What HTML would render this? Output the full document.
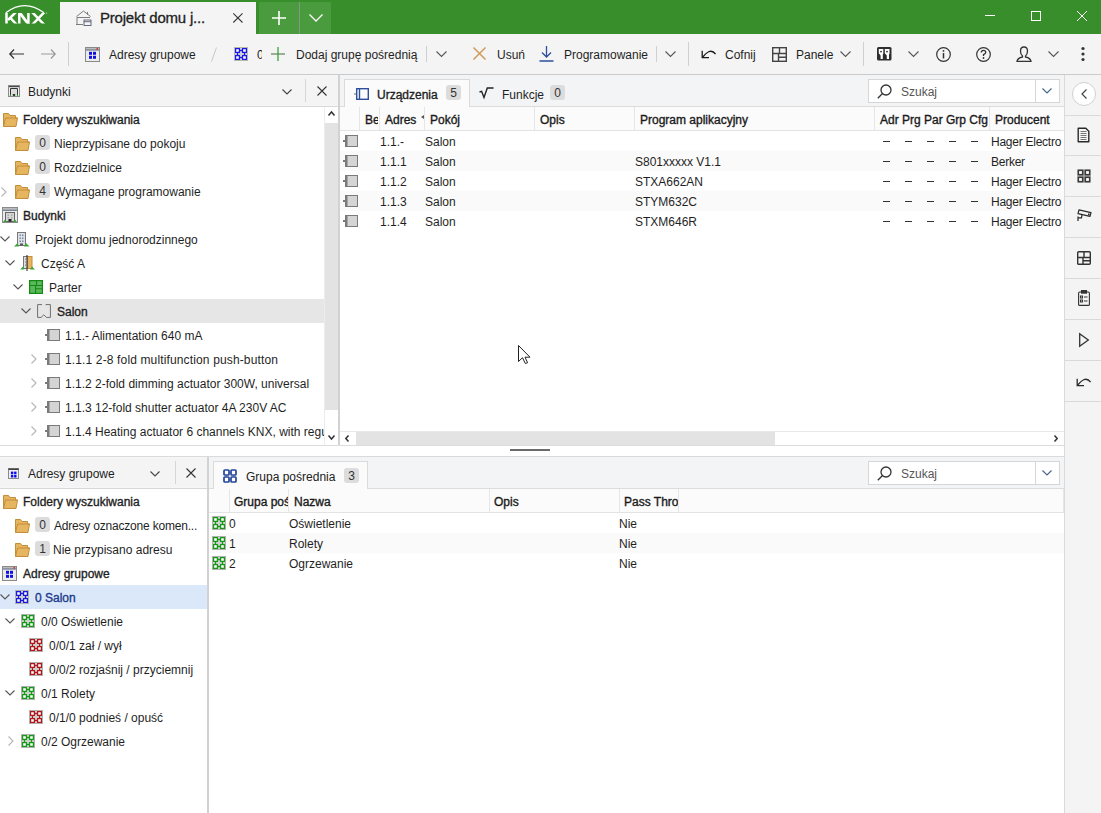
<!DOCTYPE html>
<html><head><meta charset="utf-8">
<style>
*{box-sizing:border-box;margin:0;padding:0}
html,body{width:1101px;height:813px;overflow:hidden;background:#fff}
body{position:relative;font-family:"Liberation Sans",sans-serif;font-size:12px;color:#1f1f1f}
.a{position:absolute}
.t{position:absolute;white-space:nowrap;line-height:14px}
.b{font-weight:700;letter-spacing:-0.35px}
.badge{position:absolute;background:#dcdcdc;border-radius:3px;text-align:center;line-height:17px;height:15px;width:15px;color:#333}
svg{position:absolute;overflow:visible}
</style></head><body>

<!-- TITLE BAR -->
<div class="a" style="left:0;top:0;width:1101px;height:34px;background:#378e2b"></div>
<svg style="left:0;top:0" width="56" height="34" viewBox="0 0 56 34" fill="none" stroke="#fff">
  <defs><clipPath id="kc"><rect x="0" y="13" width="56" height="10.6"/></clipPath></defs>
  <path d="M5.8 12.8 Q24.5 -1.5 44 12.8" stroke-width="1.3"/>
  <g clip-path="url(#kc)" stroke-width="2.5">
  <path d="M6.5 12 V25"/>
  <path d="M17 11 L8 20 M10 17.5 L17.5 25.5"/>
  <path d="M19.3 12 V25 M28.4 12 V25"/>
  <path d="M18.8 11.5 L29 25" stroke-width="2.8"/>
  <path d="M31.5 11.5 L45 25.5 M45 11.5 L31.5 25.5"/>
  </g>
  <circle cx="46.6" cy="13" r="0.5" fill="#fff" stroke="none"/>
</svg>
<div class="a" style="left:60px;top:2px;width:196px;height:32px;background:#f4f4f4"></div>
<div class="t" style="left:100px;top:10px;font-size:15px;line-height:16px;letter-spacing:-0.2px;color:#222;-webkit-text-stroke:0.3px #222">Projekt domu j...</div>
<div class="a" style="left:259px;top:2px;width:72px;height:32px;background:#4a9b3e"></div>
<div class="a" style="left:299px;top:2px;width:1px;height:32px;background:#86958a"></div>


<!-- title right controls -->
<svg style="left:75px;top:9px" width="17" height="18" viewBox="0 0 17 18" fill="none" stroke="#6e6e6e" stroke-width="0.9">
  <path d="M1.5 7.5 L8.5 2 L15.5 7.5"/><path d="M12.5 3 V5.5"/><path d="M2 8.5 H15"/><path d="M2 8.5 V15.5"/><path d="M1 15.5 H8"/><rect x="9" y="11" width="7" height="5.5" stroke="#555a70"/><path d="M9 12.7 H16" stroke="#555a70"/>
</svg>
<svg style="left:233px;top:13px" width="10" height="10" viewBox="0 0 10 10" stroke="#3a3a3a" stroke-width="1.1"><path d="M0.3 0.3 L9.5 9.5 M9.5 0.3 L0.3 9.5"/></svg>
<svg style="left:272px;top:11px" width="14" height="14" viewBox="0 0 14 14" stroke="#fff" stroke-width="1.6"><path d="M7 0 V14 M0 7 H14"/></svg>
<svg style="left:309px;top:14px" width="14" height="8" viewBox="0 0 14 8" fill="none" stroke="#fff" stroke-width="1.3"><path d="M0.5 0.5 L7 7 L13.5 0.5"/></svg>
<div class="a" style="left:985px;top:15px;width:10px;height:1px;background:#fff"></div>
<div class="a" style="left:1031px;top:11px;width:10px;height:10px;border:1px solid #fff"></div>
<svg style="left:1077px;top:11px" width="10" height="10" viewBox="0 0 10 10" stroke="#fff" stroke-width="1"><path d="M0 0 L10 10 M10 0 L0 10"/></svg>

<!-- TOOLBAR -->
<div class="a" style="left:0;top:34px;width:1101px;height:40px;background:#f4f4f4"></div>
<div class="a" style="left:0;top:74px;width:1101px;height:1px;background:#cbcbcb"></div>
<svg style="left:9px;top:49px" width="15" height="10" viewBox="0 0 15 10" fill="none" stroke="#333" stroke-width="1.2"><path d="M15 5 H1 M5 0.5 L0.8 5 L5 9.5"/></svg>
<svg style="left:41px;top:49px" width="15" height="10" viewBox="0 0 15 10" fill="none" stroke="#999" stroke-width="1.2"><path d="M0 5 H14 M10 0.5 L14.2 5 L10 9.5"/></svg>
<div class="a" style="left:68px;top:42px;width:1px;height:24px;background:#d0d0d0"></div>
<svg style="left:85px;top:47px" width="15" height="15" viewBox="0 0 15 15">
  <rect x="0.5" y="0.5" width="14" height="14" fill="#ececec" stroke="#8a8a8a"/><rect x="1" y="1" width="13" height="1.6" fill="#bcbcbc"/><rect x="1" y="2.6" width="13" height="0.8" fill="#2c3e60"/><rect x="11.5" y="1.2" width="1.5" height="1.3" fill="#e01010"/>
  <rect x="4" y="4.8" width="3" height="3" fill="#1010e0"/><rect x="8" y="4.8" width="3" height="3" fill="#1010e0"/><rect x="4" y="8.8" width="3" height="3" fill="#1010e0"/><rect x="8" y="8.8" width="3" height="3" fill="#1010e0"/>
</svg>
<div class="t" style="left:109px;top:48px">Adresy grupowe</div>
<svg style="left:211px;top:47px" width="6" height="15" viewBox="0 0 6 15" stroke="#c8c8c8" stroke-width="1"><path d="M5.5 0.5 L0.5 14.5"/></svg>
<svg style="left:234px;top:47px" width="14" height="14" viewBox="0 0 14 14"><rect x="0.5" y="0.5" width="13" height="13" fill="#cfcfcf" stroke="#b8b8a8"/><path d="M5.5 3.5 H8.5 M5.5 10.5 H8.5 M3.5 5.5 V8.5 M10.5 5.5 V8.5" stroke="#1a1af0" stroke-width="1.3"/><path d="M1.6 1.6h3.8v3.8h-3.8z M8.6 1.6h3.8v3.8h-3.8z M1.6 8.6h3.8v3.8h-3.8z M8.6 8.6h3.8v3.8h-3.8z" fill="#fff" stroke="#1a1af0" stroke-width="1.2"/></svg>
<div class="t" style="left:257px;top:48px;width:5px;overflow:hidden">0</div>
<svg style="left:271px;top:47px" width="14" height="14" viewBox="0 0 14 14" stroke-width="1.3"><path d="M0 7 H14" stroke="#6b8a66"/><path d="M7 0 V14" stroke="#3aa53a"/></svg>
<div class="t" style="left:296px;top:48px">Dodaj grupę pośrednią</div>
<div class="a" style="left:426px;top:46px;width:1px;height:16px;background:#d0d0d0"></div>
<svg style="left:436px;top:51px" width="11" height="6" viewBox="0 0 11 6" fill="none" stroke="#555" stroke-width="1.1"><path d="M0.5 0.5 L5.5 5.5 L10.5 0.5"/></svg>
<svg style="left:473px;top:47px" width="13" height="13" viewBox="0 0 13 13" stroke="#d09a5a" stroke-width="1.5"><path d="M0.5 0.5 L12.5 12.5 M12.5 0.5 L0.5 12.5"/></svg>
<div class="t" style="left:497px;top:48px">Usuń</div>
<svg style="left:539px;top:46px" width="15" height="16" viewBox="0 0 15 16" fill="none" stroke="#2d4f9c" stroke-width="1.3"><path d="M7.5 0 V11 M3 6.5 L7.5 11 L12 6.5 M0.5 15 H14.5"/></svg>
<div class="t" style="left:564px;top:48px">Programowanie</div>
<div class="a" style="left:656px;top:46px;width:1px;height:16px;background:#d0d0d0"></div>
<svg style="left:665px;top:51px" width="11" height="6" viewBox="0 0 11 6" fill="none" stroke="#555" stroke-width="1.1"><path d="M0.5 0.5 L5.5 5.5 L10.5 0.5"/></svg>
<div class="a" style="left:688px;top:42px;width:1px;height:24px;background:#d0d0d0"></div>
<svg style="left:701px;top:48px" width="16" height="12" viewBox="0 0 16 12" fill="none" stroke="#1a1a1a" stroke-width="1.3"><path d="M1.2 2.8 V9.6 H8"/><path d="M1.8 9 C5 5 10 0 14.6 6.2"/></svg>
<div class="t" style="left:725px;top:48px">Cofnij</div>
<svg style="left:772px;top:47px" width="15" height="15" viewBox="0 0 15 15" fill="none" stroke="#444" stroke-width="1.4"><rect x="0.7" y="0.7" width="13.6" height="13.6"/><path d="M0.7 6.5 H14.3 M7.5 0.7 V6.5 M6.5 6.5 V14.3 M6.5 10.2 H14.3"/></svg>
<div class="t" style="left:796px;top:48px">Panele</div>
<svg style="left:840px;top:51px" width="11" height="6" viewBox="0 0 11 6" fill="none" stroke="#555" stroke-width="1.1"><path d="M0.5 0.5 L5.5 5.5 L10.5 0.5"/></svg>
<div class="a" style="left:863px;top:42px;width:1px;height:24px;background:#d0d0d0"></div>
<svg style="left:877px;top:47px" width="15" height="14" viewBox="0 0 15 14">
  <rect x="0" y="0" width="14.5" height="13.5" fill="#2e2e2e" rx="1.5"/>
  <path d="M1.8 2 H6.3 V6.8 L5.8 7.5 V12 H3.6 V8.5 L1.8 6.2z M7.8 2 H12.5 V6.8 L12 7.5 V12 H9.8 V8.5 L7.8 6.2z" fill="#fff"/>
  <circle cx="4" cy="4.6" r="0.9" fill="#2e2e2e"/><circle cx="10" cy="4.6" r="0.9" fill="#2e2e2e"/>
</svg>
<svg style="left:908px;top:51px" width="11" height="6" viewBox="0 0 11 6" fill="none" stroke="#555" stroke-width="1.1"><path d="M0.5 0.5 L5.5 5.5 L10.5 0.5"/></svg>
<svg style="left:936px;top:47px" width="15" height="15" viewBox="0 0 15 15" fill="none" stroke="#333" stroke-width="1.2"><circle cx="7.5" cy="7.5" r="6.8"/><path d="M7.5 6 V11.5" stroke-width="1.5"/><circle cx="7.5" cy="3.9" r="0.9" fill="#333" stroke="none"/></svg>
<svg style="left:976px;top:47px" width="15" height="15" viewBox="0 0 15 15" fill="none" stroke="#333" stroke-width="1.2"><circle cx="7.5" cy="7.5" r="6.8"/><path d="M5.3 5.6 Q5.3 3.4 7.5 3.4 Q9.7 3.4 9.7 5.4 Q9.7 6.6 7.5 7.6 V9" stroke-width="1.3"/><circle cx="7.5" cy="11" r="0.9" fill="#333" stroke="none"/></svg>
<svg style="left:1016px;top:46px" width="16" height="16" viewBox="0 0 16 16" fill="none" stroke="#333" stroke-width="1.3"><path d="M8 1 Q4.5 1 4.5 5 Q4.5 8.5 6.5 10 L6.5 11 Q1.5 12 1 15.3 H15 Q14.5 12 9.5 11 L9.5 10 Q11.5 8.5 11.5 5 Q11.5 1 8 1z"/></svg>
<svg style="left:1048px;top:51px" width="11" height="6" viewBox="0 0 11 6" fill="none" stroke="#555" stroke-width="1.1"><path d="M0.5 0.5 L5.5 5.5 L10.5 0.5"/></svg>
<svg style="left:1081px;top:46px" width="4" height="16" viewBox="0 0 4 16" fill="#333"><circle cx="2" cy="2.5" r="1.6"/><circle cx="2" cy="8" r="1.6"/><circle cx="2" cy="13.5" r="1.6"/></svg>


<div class="a" style="left:0px;top:75px;width:338px;height:31px;background:#f4f4f4;"></div>
<div class="a" style="left:0px;top:75px;width:338px;height:1px;background:#f4f6f9;"></div>
<div class="a" style="left:0px;top:105px;width:338px;height:1px;background:#f4f6f9;"></div>
<div class="a" style="left:0px;top:106px;width:338px;height:1px;background:#d8d8d8;"></div>
<svg style="left:8px;top:85px" width="12" height="12" viewBox="0 0 12 12"><rect x="0.5" y="0.5" width="11" height="11" fill="#efefef" stroke="#8a8a8a"/><rect x="1" y="1" width="10" height="1.2" fill="#4a4a4a"/><path d="M2.5 10.5 V3.5 H9.5 V10.5" fill="#dcdcdc" stroke="#333" stroke-width="1"/><ellipse cx="6" cy="10" rx="1.4" ry="1" fill="#222"/><circle cx="2.5" cy="10.3" r="0.7" fill="#22aa22"/><circle cx="9.5" cy="10.3" r="0.7" fill="#22aa22"/></svg>
<div class="t" style="left:28px;top:85px;">Budynki</div>
<svg style="left:282px;top:89px" width="10" height="6" viewBox="0 0 10 6" fill="none" stroke="#444" stroke-width="1.1"><path d="M0.5 0.5 L5 5 L9.5 0.5"/></svg>
<div class="a" style="left:305px;top:79px;width:1px;height:23px;background:#d6d6d6;"></div>
<svg style="left:317px;top:86px" width="10" height="10" viewBox="0 0 10 10" stroke="#333" stroke-width="1.1"><path d="M0.5 0.5 L9.5 9.5 M9.5 0.5 L0.5 9.5"/></svg>
<div class="a" style="left:338px;top:75px;width:2px;height:370px;background:#d2d2d2;"></div>
<div class="a" style="left:324px;top:107px;width:1px;height:338px;background:#ececec;"></div>
<div class="a" style="left:325px;top:123px;width:13px;height:287px;background:#e3e3e3;"></div>
<svg style="left:328px;top:111px" width="7" height="5" viewBox="0 0 7 5" fill="none" stroke="#333" stroke-width="1.5"><path d="M0.5 4.5 L3.5 1 L6.5 4.5"/></svg>
<svg style="left:328px;top:435px" width="7" height="5" viewBox="0 0 7 5" fill="none" stroke="#333" stroke-width="1.5"><path d="M0.5 0.5 L3.5 4 L6.5 0.5"/></svg>
<div class="a" style="left:0px;top:299px;width:324px;height:24px;background:#e6e6e6;"></div>
<svg style="left:3px;top:113px" width="15" height="14" viewBox="0 0 15 14"><path d="M0.5 0.5 H5.5 L7 2.5 H12.5 V5 H14.5 L13 13.5 H0.5 Z" fill="#e6b55f" stroke="#c48d3a"/><path d="M0.5 13.5 L2.5 5 H14.5" fill="none" stroke="#c48d3a"/></svg>
<div class="t" style="left:23px;top:113px;-webkit-text-stroke:0.35px #1f1f1f">Foldery wyszukiwania</div>
<svg style="left:15px;top:137px" width="15" height="14" viewBox="0 0 15 14"><path d="M0.5 0.5 H5.5 L7 2.5 H12.5 V5 H14.5 L13 13.5 H0.5 Z" fill="#e6b55f" stroke="#c48d3a"/><path d="M0.5 13.5 L2.5 5 H14.5" fill="none" stroke="#c48d3a"/></svg>
<div class="badge" style="left:35px;top:135px">0</div>
<div class="t" style="left:54px;top:137px;">Nieprzypisane do pokoju</div>
<svg style="left:15px;top:161px" width="15" height="14" viewBox="0 0 15 14"><path d="M0.5 0.5 H5.5 L7 2.5 H12.5 V5 H14.5 L13 13.5 H0.5 Z" fill="#e6b55f" stroke="#c48d3a"/><path d="M0.5 13.5 L2.5 5 H14.5" fill="none" stroke="#c48d3a"/></svg>
<div class="badge" style="left:35px;top:159px">0</div>
<div class="t" style="left:54px;top:161px;">Rozdzielnice</div>
<svg style="left:1px;top:187px" width="6" height="10" viewBox="0 0 6 10" fill="none" stroke="#b5b5b5" stroke-width="1.1"><path d="M0.5 0.5 L5 5 L0.5 9.5"/></svg>
<svg style="left:15px;top:185px" width="15" height="14" viewBox="0 0 15 14"><path d="M0.5 0.5 H5.5 L7 2.5 H12.5 V5 H14.5 L13 13.5 H0.5 Z" fill="#e6b55f" stroke="#c48d3a"/><path d="M0.5 13.5 L2.5 5 H14.5" fill="none" stroke="#c48d3a"/></svg>
<div class="badge" style="left:35px;top:183px">4</div>
<div class="t" style="left:54px;top:185px;">Wymagane programowanie</div>
<svg style="left:2px;top:207px" width="16" height="16" viewBox="0 0 16 16"><rect x="0.5" y="0.5" width="15" height="15" fill="#ececec" stroke="#8a8a8a"/><rect x="1" y="1" width="14" height="1.8" fill="#bcbcbc"/><rect x="1" y="2.8" width="14" height="0.8" fill="#2c3e60"/><rect x="3.5" y="5.5" width="9" height="9" fill="#d6d6d6" stroke="#666"/><path d="M5.5 7.5h1.5v1.5h-1.5z M9 7.5h1.5v1.5h-1.5z M5.5 10h1.5v1.5h-1.5z M9 10h1.5v1.5h-1.5z" fill="#aaa"/><rect x="6.5" y="12" width="3" height="2.5" fill="#222"/><path d="M1 15 L3 12.5 L5 15z M11 15 L13 12.5 L15 15z" fill="#3aa53a"/></svg>
<div class="t" style="left:23px;top:209px;-webkit-text-stroke:0.35px #1f1f1f">Budynki</div>
<svg style="left:0px;top:236px" width="10" height="6" viewBox="0 0 10 6" fill="none" stroke="#555" stroke-width="1.1"><path d="M0.5 0.5 L5 5 L9.5 0.5"/></svg>
<svg style="left:14px;top:232px" width="16" height="15" viewBox="0 0 16 15"><rect x="3.5" y="0.5" width="8" height="13" fill="#e0e0e0" stroke="#777"/><path d="M5.5 2.5h1.5v1.5h-1.5z M8 2.5h1.5v1.5h-1.5z M5.5 5.5h1.5v1.5h-1.5z M8 5.5h1.5v1.5h-1.5z M5.5 8.5h1.5v1.5h-1.5z M8 8.5h1.5v1.5h-1.5z" fill="#6a8fc0"/><rect x="6" y="11.5" width="3" height="2" fill="#555"/><path d="M0 14.5 L3.5 11 L5 14.5z M10 14.5 L12 11 L15.5 14.5z" fill="#3aa53a"/></svg>
<div class="t" style="left:35px;top:233px;">Projekt domu jednorodzinnego</div>
<svg style="left:5px;top:260px" width="10" height="6" viewBox="0 0 10 6" fill="none" stroke="#555" stroke-width="1.1"><path d="M0.5 0.5 L5 5 L9.5 0.5"/></svg>
<svg style="left:20px;top:255px" width="15" height="16" viewBox="0 0 15 16"><rect x="3.5" y="1.5" width="4" height="12" fill="#e0e0e0" stroke="#777"/><rect x="7.5" y="1.5" width="4.5" height="12" fill="#e6b55f" stroke="#c48d3a"/><path d="M7 0 V16" stroke="#222" stroke-width="1"/><path d="M5 3.5h1.2v1.2h-1.2z M5 6.5h1.2v1.2h-1.2z M5 9.5h1.2v1.2h-1.2z" fill="#6a8fc0"/><path d="M0 14.5 L3 11.5 L4.5 14.5z M10 14.5 L12 11.5 L15 14.5z" fill="#3aa53a"/></svg>
<div class="t" style="left:41px;top:257px;">Część A</div>
<svg style="left:13px;top:284px" width="10" height="6" viewBox="0 0 10 6" fill="none" stroke="#555" stroke-width="1.1"><path d="M0.5 0.5 L5 5 L9.5 0.5"/></svg>
<svg style="left:29px;top:280px" width="14" height="14" viewBox="0 0 14 14"><rect x="0.6" y="0.6" width="12.8" height="12.8" fill="#5cb85c" stroke="#128a12" stroke-width="1.2"/><path d="M0.6 5.5 H13.4 M7.5 0.6 V5.5 M6.6 5.5 V13.4 M6.6 8.8 H13.4" stroke="#128a12" stroke-width="1.1"/></svg>
<div class="t" style="left:49px;top:281px;">Parter</div>
<svg style="left:21px;top:308px" width="10" height="6" viewBox="0 0 10 6" fill="none" stroke="#555" stroke-width="1.1"><path d="M0.5 0.5 L5 5 L9.5 0.5"/></svg>
<svg style="left:37px;top:304px" width="14" height="14" viewBox="0 0 14 14" fill="none" stroke="#6e6e6e" stroke-width="1"><path d="M5 0.6 H0.6 V13.4 H4.2 L6.8 10.8 L9.4 13.4 H13.4 V0.6 H8.6"/></svg>
<div class="t" style="left:57px;top:305px;-webkit-text-stroke:0.35px #1f1f1f">Salon</div>
<svg style="left:45px;top:329px" width="15" height="12" viewBox="0 0 15 12"><rect x="2.5" y="0.5" width="12" height="11" fill="#d4d4d4" stroke="#7a7a7a"/><rect x="2" y="0" width="2.5" height="12" fill="#7a7a7a"/><rect x="0" y="5" width="2" height="2" fill="#7a7a7a"/></svg>
<div class="t" style="left:65px;top:329px;width:259px;overflow:hidden">1.1.- Alimentation 640 mA</div>
<svg style="left:31px;top:354px" width="6" height="10" viewBox="0 0 6 10" fill="none" stroke="#b5b5b5" stroke-width="1.1"><path d="M0.5 0.5 L5 5 L0.5 9.5"/></svg>
<svg style="left:45px;top:353px" width="15" height="12" viewBox="0 0 15 12"><rect x="2.5" y="0.5" width="12" height="11" fill="#d4d4d4" stroke="#7a7a7a"/><rect x="2" y="0" width="2.5" height="12" fill="#7a7a7a"/><rect x="0" y="5" width="2" height="2" fill="#7a7a7a"/></svg>
<div class="t" style="left:65px;top:353px;width:259px;overflow:hidden;letter-spacing:0.14px">1.1.1 2-8 fold multifunction push-button</div>
<svg style="left:31px;top:378px" width="6" height="10" viewBox="0 0 6 10" fill="none" stroke="#b5b5b5" stroke-width="1.1"><path d="M0.5 0.5 L5 5 L0.5 9.5"/></svg>
<svg style="left:45px;top:377px" width="15" height="12" viewBox="0 0 15 12"><rect x="2.5" y="0.5" width="12" height="11" fill="#d4d4d4" stroke="#7a7a7a"/><rect x="2" y="0" width="2.5" height="12" fill="#7a7a7a"/><rect x="0" y="5" width="2" height="2" fill="#7a7a7a"/></svg>
<div class="t" style="left:65px;top:377px;width:259px;overflow:hidden">1.1.2 2-fold dimming actuator 300W, universal</div>
<svg style="left:31px;top:402px" width="6" height="10" viewBox="0 0 6 10" fill="none" stroke="#b5b5b5" stroke-width="1.1"><path d="M0.5 0.5 L5 5 L0.5 9.5"/></svg>
<svg style="left:45px;top:401px" width="15" height="12" viewBox="0 0 15 12"><rect x="2.5" y="0.5" width="12" height="11" fill="#d4d4d4" stroke="#7a7a7a"/><rect x="2" y="0" width="2.5" height="12" fill="#7a7a7a"/><rect x="0" y="5" width="2" height="2" fill="#7a7a7a"/></svg>
<div class="t" style="left:65px;top:401px;width:259px;overflow:hidden">1.1.3 12-fold shutter actuator 4A 230V AC</div>
<svg style="left:31px;top:426px" width="6" height="10" viewBox="0 0 6 10" fill="none" stroke="#b5b5b5" stroke-width="1.1"><path d="M0.5 0.5 L5 5 L0.5 9.5"/></svg>
<svg style="left:45px;top:425px" width="15" height="12" viewBox="0 0 15 12"><rect x="2.5" y="0.5" width="12" height="11" fill="#d4d4d4" stroke="#7a7a7a"/><rect x="2" y="0" width="2.5" height="12" fill="#7a7a7a"/><rect x="0" y="5" width="2" height="2" fill="#7a7a7a"/></svg>
<div class="t" style="left:65px;top:425px;width:259px;overflow:hidden">1.1.4 Heating actuator 6 channels KNX, with regulation</div>
<div class="a" style="left:0px;top:445px;width:1064px;height:1px;background:#dcdcdc;"></div>
<div class="a" style="left:340px;top:75px;width:724px;height:31px;background:#f3f4f6;"></div>
<div class="a" style="left:340px;top:106px;width:724px;height:1px;background:#dcdcdc;"></div>
<div class="a" style="left:344px;top:79px;width:126px;height:28px;background:#fbfbfb;border:1px solid #dadada;border-bottom:none"></div>
<svg style="left:354px;top:88px" width="15" height="12" viewBox="0 0 15 12" fill="none" stroke="#2d4f9c" stroke-width="1.4"><rect x="2.7" y="0.7" width="11.6" height="10.6"/><path d="M5.5 0.7 V11.3"/><path d="M0 6 H2.5" stroke="#666" stroke-width="1"/></svg>
<div class="t" style="left:377px;top:88px;-webkit-text-stroke:0.35px #1f1f1f;color:#222">Urządzenia</div>
<div class="badge" style="left:446px;top:85px">5</div>
<svg style="left:479px;top:87px" width="16" height="12" viewBox="0 0 16 12" fill="none" stroke="#222" stroke-width="1.4"><path d="M0.5 5 L2.6 4.3 L5 10.5 L8.3 1 H14.5"/></svg>
<div class="t" style="left:502px;top:88px;">Funkcje</div>
<div class="badge" style="left:550px;top:85px">0</div>
<div class="a" style="left:868px;top:79px;width:192px;height:24px;background:#fff;border:1px solid #d6d6d6"></div>
<div class="a" style="left:1035px;top:80px;width:1px;height:22px;background:#d6d6d6;"></div>
<svg style="left:877px;top:84px" width="15" height="15" viewBox="0 0 15 15" fill="none" stroke="#333" stroke-width="1.3"><circle cx="9" cy="6" r="5"/><path d="M5.5 9.5 L0.8 14.2"/></svg>
<div class="t" style="left:901px;top:85px;color:#555">Szukaj</div>
<svg style="left:1042px;top:88px" width="10" height="6" viewBox="0 0 10 6" fill="none" stroke="#4a6890" stroke-width="1.2"><path d="M0.5 0.5 L5 5 L9.5 0.5"/></svg>
<div class="a" style="left:340px;top:107px;width:724px;height:23px;background:#fbfbfb;"></div>
<div class="a" style="left:340px;top:130px;width:724px;height:1px;background:#e3e3e3;"></div>
<div class="a" style="left:359px;top:107px;width:1px;height:23px;background:#e6e6e6;"></div>
<div class="a" style="left:379px;top:107px;width:1px;height:23px;background:#e6e6e6;"></div>
<div class="a" style="left:424px;top:107px;width:1px;height:23px;background:#e6e6e6;"></div>
<div class="a" style="left:534px;top:107px;width:1px;height:23px;background:#e6e6e6;"></div>
<div class="a" style="left:634px;top:107px;width:1px;height:23px;background:#e6e6e6;"></div>
<div class="a" style="left:874px;top:107px;width:1px;height:23px;background:#e6e6e6;"></div>
<div class="a" style="left:989px;top:107px;width:1px;height:23px;background:#e6e6e6;"></div>
<div class="t" style="left:365px;top:113px;-webkit-text-stroke:0.35px #1a1a1a;color:#1a1a1a;width:13px;overflow:hidden">Be</div>
<div class="t" style="left:385px;top:113px;-webkit-text-stroke:0.35px #1a1a1a;color:#1a1a1a">Adres</div>
<svg style="left:421px;top:115px" width="3" height="4" viewBox="0 0 3 4"><path d="M3 0 L0 2 L3 4z" fill="#555"/></svg>
<div class="t" style="left:430px;top:113px;-webkit-text-stroke:0.35px #1a1a1a;color:#1a1a1a">Pokój</div>
<div class="t" style="left:540px;top:113px;-webkit-text-stroke:0.35px #1a1a1a;color:#1a1a1a">Opis</div>
<div class="t" style="left:640px;top:113px;-webkit-text-stroke:0.35px #1a1a1a;color:#1a1a1a">Program aplikacyjny</div>
<div class="t" style="left:880px;top:113px;-webkit-text-stroke:0.35px #1a1a1a;color:#1a1a1a">Adr Prg Par Grp Cfg</div>
<div class="t" style="left:995px;top:113px;-webkit-text-stroke:0.35px #1a1a1a;color:#1a1a1a">Producent</div>
<svg style="left:343px;top:135px" width="15" height="12" viewBox="0 0 15 12"><rect x="2.5" y="0.5" width="12" height="11" fill="#d4d4d4" stroke="#7a7a7a"/><rect x="2" y="0" width="2.5" height="12" fill="#7a7a7a"/><rect x="0" y="5" width="2" height="2" fill="#7a7a7a"/></svg>
<div class="t" style="left:380px;top:135px;">1.1.-</div>
<div class="t" style="left:425px;top:135px;">Salon</div>
<div class="a" style="left:883px;top:141px;width:7px;height:1px;background:#333;"></div>
<div class="a" style="left:905px;top:141px;width:7px;height:1px;background:#333;"></div>
<div class="a" style="left:927px;top:141px;width:7px;height:1px;background:#333;"></div>
<div class="a" style="left:949px;top:141px;width:7px;height:1px;background:#333;"></div>
<div class="a" style="left:971px;top:141px;width:7px;height:1px;background:#333;"></div>
<div class="t" style="left:991px;top:135px;width:73px;overflow:hidden;letter-spacing:-0.25px">Hager Electro</div>
<div class="a" style="left:340px;top:151px;width:724px;height:20px;background:#fafafa;"></div>
<svg style="left:343px;top:155px" width="15" height="12" viewBox="0 0 15 12"><rect x="2.5" y="0.5" width="12" height="11" fill="#d4d4d4" stroke="#7a7a7a"/><rect x="2" y="0" width="2.5" height="12" fill="#7a7a7a"/><rect x="0" y="5" width="2" height="2" fill="#7a7a7a"/></svg>
<div class="t" style="left:380px;top:155px;">1.1.1</div>
<div class="t" style="left:425px;top:155px;">Salon</div>
<div class="t" style="left:635px;top:155px;">S801xxxxx V1.1</div>
<div class="a" style="left:883px;top:161px;width:7px;height:1px;background:#333;"></div>
<div class="a" style="left:905px;top:161px;width:7px;height:1px;background:#333;"></div>
<div class="a" style="left:927px;top:161px;width:7px;height:1px;background:#333;"></div>
<div class="a" style="left:949px;top:161px;width:7px;height:1px;background:#333;"></div>
<div class="a" style="left:971px;top:161px;width:7px;height:1px;background:#333;"></div>
<div class="t" style="left:991px;top:155px;width:73px;overflow:hidden;letter-spacing:-0.25px">Berker</div>
<svg style="left:343px;top:175px" width="15" height="12" viewBox="0 0 15 12"><rect x="2.5" y="0.5" width="12" height="11" fill="#d4d4d4" stroke="#7a7a7a"/><rect x="2" y="0" width="2.5" height="12" fill="#7a7a7a"/><rect x="0" y="5" width="2" height="2" fill="#7a7a7a"/></svg>
<div class="t" style="left:380px;top:175px;">1.1.2</div>
<div class="t" style="left:425px;top:175px;">Salon</div>
<div class="t" style="left:635px;top:175px;">STXA662AN</div>
<div class="a" style="left:883px;top:181px;width:7px;height:1px;background:#333;"></div>
<div class="a" style="left:905px;top:181px;width:7px;height:1px;background:#333;"></div>
<div class="a" style="left:927px;top:181px;width:7px;height:1px;background:#333;"></div>
<div class="a" style="left:949px;top:181px;width:7px;height:1px;background:#333;"></div>
<div class="a" style="left:971px;top:181px;width:7px;height:1px;background:#333;"></div>
<div class="t" style="left:991px;top:175px;width:73px;overflow:hidden;letter-spacing:-0.25px">Hager Electro</div>
<div class="a" style="left:340px;top:191px;width:724px;height:20px;background:#fafafa;"></div>
<svg style="left:343px;top:195px" width="15" height="12" viewBox="0 0 15 12"><rect x="2.5" y="0.5" width="12" height="11" fill="#d4d4d4" stroke="#7a7a7a"/><rect x="2" y="0" width="2.5" height="12" fill="#7a7a7a"/><rect x="0" y="5" width="2" height="2" fill="#7a7a7a"/></svg>
<div class="t" style="left:380px;top:195px;">1.1.3</div>
<div class="t" style="left:425px;top:195px;">Salon</div>
<div class="t" style="left:635px;top:195px;">STYM632C</div>
<div class="a" style="left:883px;top:201px;width:7px;height:1px;background:#333;"></div>
<div class="a" style="left:905px;top:201px;width:7px;height:1px;background:#333;"></div>
<div class="a" style="left:927px;top:201px;width:7px;height:1px;background:#333;"></div>
<div class="a" style="left:949px;top:201px;width:7px;height:1px;background:#333;"></div>
<div class="a" style="left:971px;top:201px;width:7px;height:1px;background:#333;"></div>
<div class="t" style="left:991px;top:195px;width:73px;overflow:hidden;letter-spacing:-0.25px">Hager Electro</div>
<svg style="left:343px;top:215px" width="15" height="12" viewBox="0 0 15 12"><rect x="2.5" y="0.5" width="12" height="11" fill="#d4d4d4" stroke="#7a7a7a"/><rect x="2" y="0" width="2.5" height="12" fill="#7a7a7a"/><rect x="0" y="5" width="2" height="2" fill="#7a7a7a"/></svg>
<div class="t" style="left:380px;top:215px;">1.1.4</div>
<div class="t" style="left:425px;top:215px;">Salon</div>
<div class="t" style="left:635px;top:215px;">STXM646R</div>
<div class="a" style="left:883px;top:221px;width:7px;height:1px;background:#333;"></div>
<div class="a" style="left:905px;top:221px;width:7px;height:1px;background:#333;"></div>
<div class="a" style="left:927px;top:221px;width:7px;height:1px;background:#333;"></div>
<div class="a" style="left:949px;top:221px;width:7px;height:1px;background:#333;"></div>
<div class="a" style="left:971px;top:221px;width:7px;height:1px;background:#333;"></div>
<div class="t" style="left:991px;top:215px;width:73px;overflow:hidden;letter-spacing:-0.25px">Hager Electro</div>
<div class="a" style="left:340px;top:431px;width:724px;height:1px;background:#e8e8e8;"></div>
<div class="a" style="left:356px;top:432px;width:419px;height:13px;background:#e3e3e3;"></div>
<svg style="left:345px;top:435px" width="4" height="7" viewBox="0 0 4 7" fill="none" stroke="#333" stroke-width="1.5"><path d="M3.5 0.5 L0.8 3.5 L3.5 6.5"/></svg>
<svg style="left:1054px;top:435px" width="4" height="7" viewBox="0 0 4 7" fill="none" stroke="#333" stroke-width="1.5"><path d="M0.5 0.5 L3.2 3.5 L0.5 6.5"/></svg>
<svg style="left:518px;top:345px" width="12" height="19" viewBox="0 0 12 19"><path d="M0.5 0.5 V16.5 L4.5 12.7 L7.3 18.5 L9.6 17.7 L7 12.2 H12z" fill="#fff" stroke="#222" stroke-width="1"/></svg>
<div class="a" style="left:1064px;top:75px;width:37px;height:738px;background:#f4f4f4;"></div>
<div class="a" style="left:1064px;top:75px;width:1px;height:738px;background:#dadada;"></div>
<div class="a" style="left:1072px;top:82px;width:24px;height:24px;border-radius:50%;background:#fff;border:1px solid #d0d0d0"></div>
<svg style="left:1081px;top:89px" width="6" height="10" viewBox="0 0 6 10" fill="none" stroke="#444" stroke-width="1.2"><path d="M5.5 0.5 L1 5 L5.5 9.5"/></svg>
<div class="a" style="left:1065px;top:115px;width:36px;height:1px;background:#dadada;"></div>
<div class="a" style="left:1065px;top:155px;width:36px;height:1px;background:#dadada;"></div>
<div class="a" style="left:1065px;top:196px;width:36px;height:1px;background:#dadada;"></div>
<div class="a" style="left:1065px;top:237px;width:36px;height:1px;background:#dadada;"></div>
<div class="a" style="left:1065px;top:278px;width:36px;height:1px;background:#dadada;"></div>
<div class="a" style="left:1065px;top:319px;width:36px;height:1px;background:#dadada;"></div>
<div class="a" style="left:1065px;top:360px;width:36px;height:1px;background:#dadada;"></div>
<div class="a" style="left:1065px;top:401px;width:36px;height:1px;background:#dadada;"></div>
<svg style="left:1077px;top:127px" width="13" height="16" viewBox="0 0 13 16" fill="none" stroke="#2a2a2a" stroke-width="1.4"><path d="M1.2 1.2 H8.8 L11.8 4.2 V14.8 H1.2z" stroke-linejoin="round"/><path d="M3.5 4.5 H9.5 M3.5 6.5 H9.5 M3.5 8.5 H9.5 M3.5 10.5 H9.5 M3.5 12.5 H9.5" stroke-width="0.8" stroke="#555"/></svg>
<svg style="left:1077px;top:169px" width="14" height="14" viewBox="0 0 14 14"><rect x="0.5" y="0.5" width="13" height="13" fill="#bdbdbd" rx="1"/><g fill="#fff" stroke="#3a3a3a" stroke-width="1.6"><rect x="1.3" y="1.3" width="4.4" height="4.4"/><rect x="8.3" y="1.3" width="4.4" height="4.4"/><rect x="1.3" y="8.3" width="4.4" height="4.4"/><rect x="8.3" y="8.3" width="4.4" height="4.4"/></g></svg>
<svg style="left:1077px;top:209px" width="15" height="13" viewBox="0 0 15 13" fill="none" stroke="#2a2a2a" stroke-width="1.2"><path d="M2 0.8 L14 3.6 L13 7.4 L1 4.6z" stroke-linejoin="round"/><path d="M11.8 4.5 V6.3" stroke-width="1.6"/><path d="M5 5.5 L4.5 8.8 H1.2 M1 7.5 V12"/></svg>
<svg style="left:1077px;top:251px" width="14" height="14" viewBox="0 0 14 14" fill="none" stroke="#333" stroke-width="1.4"><rect x="0.7" y="0.7" width="12.6" height="12.6" rx="1"/><path d="M0.7 6.5 H13.3 M7 0.7 V6.5 M6 6.5 V13.3 M6 9.8 H13.3"/></svg>
<svg style="left:1078px;top:290px" width="12" height="16" viewBox="0 0 12 16" fill="none" stroke="#333" stroke-width="1.1"><rect x="0.6" y="2" width="10.8" height="13.4" rx="1"/><rect x="3.5" y="0.6" width="5" height="2.5" fill="#333"/><path d="M2.5 6 H4.5 V8 H2.5z M2.5 10 H4.5 V12 H2.5z M6 7 H9.5 M6 11 H9.5"/></svg>
<svg style="left:1079px;top:333px" width="10" height="14" viewBox="0 0 10 14" fill="none" stroke="#333" stroke-width="1.3"><path d="M0.7 0.7 L9.3 7 L0.7 13.3z"/></svg>
<svg style="left:1076px;top:376px" width="16" height="12" viewBox="0 0 16 12" fill="none" stroke="#2a2a2a" stroke-width="1.3"><path d="M1.2 2.8 V9.6 H8"/><path d="M1.8 9 C5 5 10 0 14.6 6.2"/></svg>
<div class="a" style="left:0px;top:456px;width:1064px;height:1px;background:#dadada;"></div>
<div class="a" style="left:510px;top:449px;width:40px;height:2px;background:#6b6b6b;"></div>
<div class="a" style="left:0px;top:457px;width:207px;height:31px;background:#f4f4f4;"></div>
<div class="a" style="left:0px;top:457px;width:207px;height:1px;background:#f4f6f9;"></div>
<div class="a" style="left:0px;top:487px;width:207px;height:1px;background:#f4f6f9;"></div>
<div class="a" style="left:0px;top:488px;width:207px;height:1px;background:#d8d8d8;"></div>
<div class="a" style="left:207px;top:457px;width:2px;height:356px;background:#d2d2d2;"></div>
<svg style="left:8px;top:468px" width="11" height="11" viewBox="0 0 11 11"><rect x="0.5" y="0.5" width="10" height="10" fill="#f0f0f0" stroke="#8a8a8a"/><rect x="0.5" y="0.5" width="10" height="1.5" fill="#444"/><rect x="2.9" y="3.6" width="2.4" height="2.6" fill="#0a0af0"/><rect x="6.1" y="3.6" width="2.4" height="2.6" fill="#0a0af0"/><rect x="2.9" y="6.9" width="2.4" height="2.6" fill="#0a0af0"/><rect x="6.1" y="6.9" width="2.4" height="2.6" fill="#0a0af0"/></svg>
<div class="t" style="left:28px;top:467px;">Adresy grupowe</div>
<svg style="left:150px;top:471px" width="10" height="6" viewBox="0 0 10 6" fill="none" stroke="#444" stroke-width="1.1"><path d="M0.5 0.5 L5 5 L9.5 0.5"/></svg>
<div class="a" style="left:175px;top:461px;width:1px;height:23px;background:#d6d6d6;"></div>
<svg style="left:186px;top:468px" width="10" height="10" viewBox="0 0 10 10" stroke="#333" stroke-width="1.1"><path d="M0.5 0.5 L9.5 9.5 M9.5 0.5 L0.5 9.5"/></svg>
<svg style="left:3px;top:495px" width="15" height="14" viewBox="0 0 15 14"><path d="M0.5 0.5 H5.5 L7 2.5 H12.5 V5 H14.5 L13 13.5 H0.5 Z" fill="#e6b55f" stroke="#c48d3a"/><path d="M0.5 13.5 L2.5 5 H14.5" fill="none" stroke="#c48d3a"/></svg>
<div class="t" style="left:23px;top:495px;-webkit-text-stroke:0.35px #1f1f1f">Foldery wyszukiwania</div>
<svg style="left:15px;top:519px" width="15" height="14" viewBox="0 0 15 14"><path d="M0.5 0.5 H5.5 L7 2.5 H12.5 V5 H14.5 L13 13.5 H0.5 Z" fill="#e6b55f" stroke="#c48d3a"/><path d="M0.5 13.5 L2.5 5 H14.5" fill="none" stroke="#c48d3a"/></svg>
<div class="badge" style="left:35px;top:517px">0</div>
<div class="t" style="left:54px;top:519px;letter-spacing:-0.2px">Adresy oznaczone komen...</div>
<svg style="left:15px;top:543px" width="15" height="14" viewBox="0 0 15 14"><path d="M0.5 0.5 H5.5 L7 2.5 H12.5 V5 H14.5 L13 13.5 H0.5 Z" fill="#e6b55f" stroke="#c48d3a"/><path d="M0.5 13.5 L2.5 5 H14.5" fill="none" stroke="#c48d3a"/></svg>
<div class="badge" style="left:35px;top:541px">1</div>
<div class="t" style="left:53px;top:543px;">Nie przypisano adresu</div>
<svg style="left:2px;top:566px" width="15" height="15" viewBox="0 0 15 15"><rect x="0.5" y="0.5" width="14" height="14" fill="#ececec" stroke="#8a8a8a"/><rect x="1" y="1" width="13" height="1.6" fill="#bcbcbc"/><rect x="1" y="2.6" width="13" height="0.8" fill="#2c3e60"/><rect x="11.5" y="1.2" width="1.5" height="1.3" fill="#e01010"/><rect x="4" y="4.8" width="3" height="3" fill="#1010e0"/><rect x="8" y="4.8" width="3" height="3" fill="#1010e0"/><rect x="4" y="8.8" width="3" height="3" fill="#1010e0"/><rect x="8" y="8.8" width="3" height="3" fill="#1010e0"/></svg>
<div class="t" style="left:23px;top:567px;-webkit-text-stroke:0.35px #1f1f1f">Adresy grupowe</div>
<div class="a" style="left:0px;top:585px;width:207px;height:24px;background:#dbe8fa;"></div>
<svg style="left:0px;top:594px" width="10" height="6" viewBox="0 0 10 6" fill="none" stroke="#555" stroke-width="1.1"><path d="M0.5 0.5 L5 5 L9.5 0.5"/></svg>
<svg style="left:15px;top:590px" width="14" height="14" viewBox="0 0 14 14"><rect x="0.5" y="0.5" width="13" height="13" fill="#cfcfcf" stroke="#b0b0b0"/><path d="M5.5 3.5 H8.5 M5.5 10.5 H8.5 M3.5 5.5 V8.5 M10.5 5.5 V8.5" stroke="#1a1ae0" stroke-width="1.3"/><path d="M1.6 1.6h3.8v3.8h-3.8z M8.6 1.6h3.8v3.8h-3.8z M1.6 8.6h3.8v3.8h-3.8z M8.6 8.6h3.8v3.8h-3.8z" fill="#fff" stroke="#1a1ae0" stroke-width="1.2"/></svg>
<div class="t" style="left:35px;top:591px;color:#1b3a8a;-webkit-text-stroke:0.35px #1b3a8a">0 Salon</div>
<svg style="left:5px;top:618px" width="10" height="6" viewBox="0 0 10 6" fill="none" stroke="#555" stroke-width="1.1"><path d="M0.5 0.5 L5 5 L9.5 0.5"/></svg>
<svg style="left:21px;top:614px" width="14" height="14" viewBox="0 0 14 14"><rect x="0.5" y="0.5" width="13" height="13" fill="#cfcfcf" stroke="#b0b0b0"/><path d="M5.5 3.5 H8.5 M5.5 10.5 H8.5 M3.5 5.5 V8.5 M10.5 5.5 V8.5" stroke="#179a17" stroke-width="1.3"/><path d="M1.6 1.6h3.8v3.8h-3.8z M8.6 1.6h3.8v3.8h-3.8z M1.6 8.6h3.8v3.8h-3.8z M8.6 8.6h3.8v3.8h-3.8z" fill="#fff" stroke="#179a17" stroke-width="1.2"/></svg>
<div class="t" style="left:41px;top:615px;">0/0 Oświetlenie</div>
<svg style="left:29px;top:638px" width="14" height="14" viewBox="0 0 14 14"><rect x="0.5" y="0.5" width="13" height="13" fill="#cfcfcf" stroke="#b0b0b0"/><path d="M5.5 3.5 H8.5 M5.5 10.5 H8.5 M3.5 5.5 V8.5 M10.5 5.5 V8.5" stroke="#b01a1a" stroke-width="1.3"/><path d="M1.6 1.6h3.8v3.8h-3.8z M8.6 1.6h3.8v3.8h-3.8z M1.6 8.6h3.8v3.8h-3.8z M8.6 8.6h3.8v3.8h-3.8z" fill="#fff" stroke="#b01a1a" stroke-width="1.2"/></svg>
<div class="t" style="left:49px;top:639px;">0/0/1 zał / wył</div>
<svg style="left:29px;top:662px" width="14" height="14" viewBox="0 0 14 14"><rect x="0.5" y="0.5" width="13" height="13" fill="#cfcfcf" stroke="#b0b0b0"/><path d="M5.5 3.5 H8.5 M5.5 10.5 H8.5 M3.5 5.5 V8.5 M10.5 5.5 V8.5" stroke="#b01a1a" stroke-width="1.3"/><path d="M1.6 1.6h3.8v3.8h-3.8z M8.6 1.6h3.8v3.8h-3.8z M1.6 8.6h3.8v3.8h-3.8z M8.6 8.6h3.8v3.8h-3.8z" fill="#fff" stroke="#b01a1a" stroke-width="1.2"/></svg>
<div class="t" style="left:49px;top:663px;">0/0/2 rozjaśnij / przyciemnij</div>
<svg style="left:5px;top:690px" width="10" height="6" viewBox="0 0 10 6" fill="none" stroke="#555" stroke-width="1.1"><path d="M0.5 0.5 L5 5 L9.5 0.5"/></svg>
<svg style="left:21px;top:686px" width="14" height="14" viewBox="0 0 14 14"><rect x="0.5" y="0.5" width="13" height="13" fill="#cfcfcf" stroke="#b0b0b0"/><path d="M5.5 3.5 H8.5 M5.5 10.5 H8.5 M3.5 5.5 V8.5 M10.5 5.5 V8.5" stroke="#179a17" stroke-width="1.3"/><path d="M1.6 1.6h3.8v3.8h-3.8z M8.6 1.6h3.8v3.8h-3.8z M1.6 8.6h3.8v3.8h-3.8z M8.6 8.6h3.8v3.8h-3.8z" fill="#fff" stroke="#179a17" stroke-width="1.2"/></svg>
<div class="t" style="left:41px;top:687px;">0/1 Rolety</div>
<svg style="left:29px;top:710px" width="14" height="14" viewBox="0 0 14 14"><rect x="0.5" y="0.5" width="13" height="13" fill="#cfcfcf" stroke="#b0b0b0"/><path d="M5.5 3.5 H8.5 M5.5 10.5 H8.5 M3.5 5.5 V8.5 M10.5 5.5 V8.5" stroke="#b01a1a" stroke-width="1.3"/><path d="M1.6 1.6h3.8v3.8h-3.8z M8.6 1.6h3.8v3.8h-3.8z M1.6 8.6h3.8v3.8h-3.8z M8.6 8.6h3.8v3.8h-3.8z" fill="#fff" stroke="#b01a1a" stroke-width="1.2"/></svg>
<div class="t" style="left:49px;top:711px;">0/1/0 podnieś / opuść</div>
<svg style="left:8px;top:736px" width="6" height="10" viewBox="0 0 6 10" fill="none" stroke="#b5b5b5" stroke-width="1.1"><path d="M0.5 0.5 L5 5 L0.5 9.5"/></svg>
<svg style="left:21px;top:734px" width="14" height="14" viewBox="0 0 14 14"><rect x="0.5" y="0.5" width="13" height="13" fill="#cfcfcf" stroke="#b0b0b0"/><path d="M5.5 3.5 H8.5 M5.5 10.5 H8.5 M3.5 5.5 V8.5 M10.5 5.5 V8.5" stroke="#179a17" stroke-width="1.3"/><path d="M1.6 1.6h3.8v3.8h-3.8z M8.6 1.6h3.8v3.8h-3.8z M1.6 8.6h3.8v3.8h-3.8z M8.6 8.6h3.8v3.8h-3.8z" fill="#fff" stroke="#179a17" stroke-width="1.2"/></svg>
<div class="t" style="left:41px;top:735px;">0/2 Ogrzewanie</div>
<div class="a" style="left:209px;top:457px;width:855px;height:31px;background:#f3f4f6;"></div>
<div class="a" style="left:209px;top:488px;width:855px;height:1px;background:#dcdcdc;"></div>
<div class="a" style="left:213px;top:461px;width:155px;height:28px;background:#fbfbfb;border:1px solid #dadada;border-bottom:none"></div>
<svg style="left:223px;top:469px" width="14" height="14" viewBox="0 0 14 14"><path d="M6 3.5 H8 M6 10.5 H8 M3.5 6 V8 M10.5 6 V8" stroke="#c9bfae" stroke-width="1.2"/><g fill="#fff" stroke="#23449a" stroke-width="1.7"><rect x="1" y="1" width="5" height="5" rx="0.8"/><rect x="8" y="1" width="5" height="5" rx="0.8"/><rect x="1" y="8" width="5" height="5" rx="0.8"/><rect x="8" y="8" width="5" height="5" rx="0.8"/></g></svg>
<div class="t" style="left:246px;top:470px;color:#222">Grupa pośrednia</div>
<div class="badge" style="left:344px;top:468px">3</div>
<div class="a" style="left:868px;top:461px;width:192px;height:24px;background:#fff;border:1px solid #d6d6d6"></div>
<div class="a" style="left:1035px;top:462px;width:1px;height:22px;background:#d6d6d6;"></div>
<svg style="left:877px;top:466px" width="15" height="15" viewBox="0 0 15 15" fill="none" stroke="#333" stroke-width="1.3"><circle cx="9" cy="6" r="5"/><path d="M5.5 9.5 L0.8 14.2"/></svg>
<div class="t" style="left:901px;top:467px;color:#555">Szukaj</div>
<svg style="left:1042px;top:470px" width="10" height="6" viewBox="0 0 10 6" fill="none" stroke="#4a6890" stroke-width="1.2"><path d="M0.5 0.5 L5 5 L9.5 0.5"/></svg>
<div class="a" style="left:209px;top:489px;width:855px;height:23px;background:#fbfbfb;"></div>
<div class="a" style="left:209px;top:512px;width:855px;height:1px;background:#e3e3e3;"></div>
<div class="a" style="left:229px;top:489px;width:1px;height:23px;background:#e6e6e6;"></div>
<div class="a" style="left:288px;top:489px;width:1px;height:23px;background:#e6e6e6;"></div>
<div class="a" style="left:489px;top:489px;width:1px;height:23px;background:#e6e6e6;"></div>
<div class="a" style="left:619px;top:489px;width:1px;height:23px;background:#e6e6e6;"></div>
<div class="a" style="left:678px;top:489px;width:1px;height:23px;background:#e6e6e6;"></div>
<div class="a" style="left:1063px;top:489px;width:1px;height:23px;background:#e6e6e6;"></div>
<div class="t" style="left:234px;top:495px;-webkit-text-stroke:0.35px #1a1a1a;color:#1a1a1a;width:54px;overflow:hidden">Grupa pośrednia</div>
<div class="t" style="left:294px;top:495px;-webkit-text-stroke:0.35px #1a1a1a;color:#1a1a1a">Nazwa</div>
<div class="t" style="left:494px;top:495px;-webkit-text-stroke:0.35px #1a1a1a;color:#1a1a1a">Opis</div>
<div class="t" style="left:624px;top:495px;-webkit-text-stroke:0.35px #1a1a1a;color:#1a1a1a;width:54px;overflow:hidden">Pass Through</div>
<svg style="left:212px;top:516px" width="14" height="14" viewBox="0 0 14 14"><rect x="0.5" y="0.5" width="13" height="13" fill="#cfcfcf" stroke="#b0b0b0"/><path d="M5.5 3.5 H8.5 M5.5 10.5 H8.5 M3.5 5.5 V8.5 M10.5 5.5 V8.5" stroke="#179a17" stroke-width="1.3"/><path d="M1.6 1.6h3.8v3.8h-3.8z M8.6 1.6h3.8v3.8h-3.8z M1.6 8.6h3.8v3.8h-3.8z M8.6 8.6h3.8v3.8h-3.8z" fill="#fff" stroke="#179a17" stroke-width="1.2"/></svg>
<div class="t" style="left:229px;top:517px;">0</div>
<div class="t" style="left:289px;top:517px;">Oświetlenie</div>
<div class="t" style="left:619px;top:517px;">Nie</div>
<div class="a" style="left:209px;top:533px;width:855px;height:20px;background:#fafafa;"></div>
<svg style="left:212px;top:536px" width="14" height="14" viewBox="0 0 14 14"><rect x="0.5" y="0.5" width="13" height="13" fill="#cfcfcf" stroke="#b0b0b0"/><path d="M5.5 3.5 H8.5 M5.5 10.5 H8.5 M3.5 5.5 V8.5 M10.5 5.5 V8.5" stroke="#179a17" stroke-width="1.3"/><path d="M1.6 1.6h3.8v3.8h-3.8z M8.6 1.6h3.8v3.8h-3.8z M1.6 8.6h3.8v3.8h-3.8z M8.6 8.6h3.8v3.8h-3.8z" fill="#fff" stroke="#179a17" stroke-width="1.2"/></svg>
<div class="t" style="left:229px;top:537px;">1</div>
<div class="t" style="left:289px;top:537px;">Rolety</div>
<div class="t" style="left:619px;top:537px;">Nie</div>
<svg style="left:212px;top:556px" width="14" height="14" viewBox="0 0 14 14"><rect x="0.5" y="0.5" width="13" height="13" fill="#cfcfcf" stroke="#b0b0b0"/><path d="M5.5 3.5 H8.5 M5.5 10.5 H8.5 M3.5 5.5 V8.5 M10.5 5.5 V8.5" stroke="#179a17" stroke-width="1.3"/><path d="M1.6 1.6h3.8v3.8h-3.8z M8.6 1.6h3.8v3.8h-3.8z M1.6 8.6h3.8v3.8h-3.8z M8.6 8.6h3.8v3.8h-3.8z" fill="#fff" stroke="#179a17" stroke-width="1.2"/></svg>
<div class="t" style="left:229px;top:557px;">2</div>
<div class="t" style="left:289px;top:557px;">Ogrzewanie</div>
<div class="t" style="left:619px;top:557px;">Nie</div>
</body></html>
